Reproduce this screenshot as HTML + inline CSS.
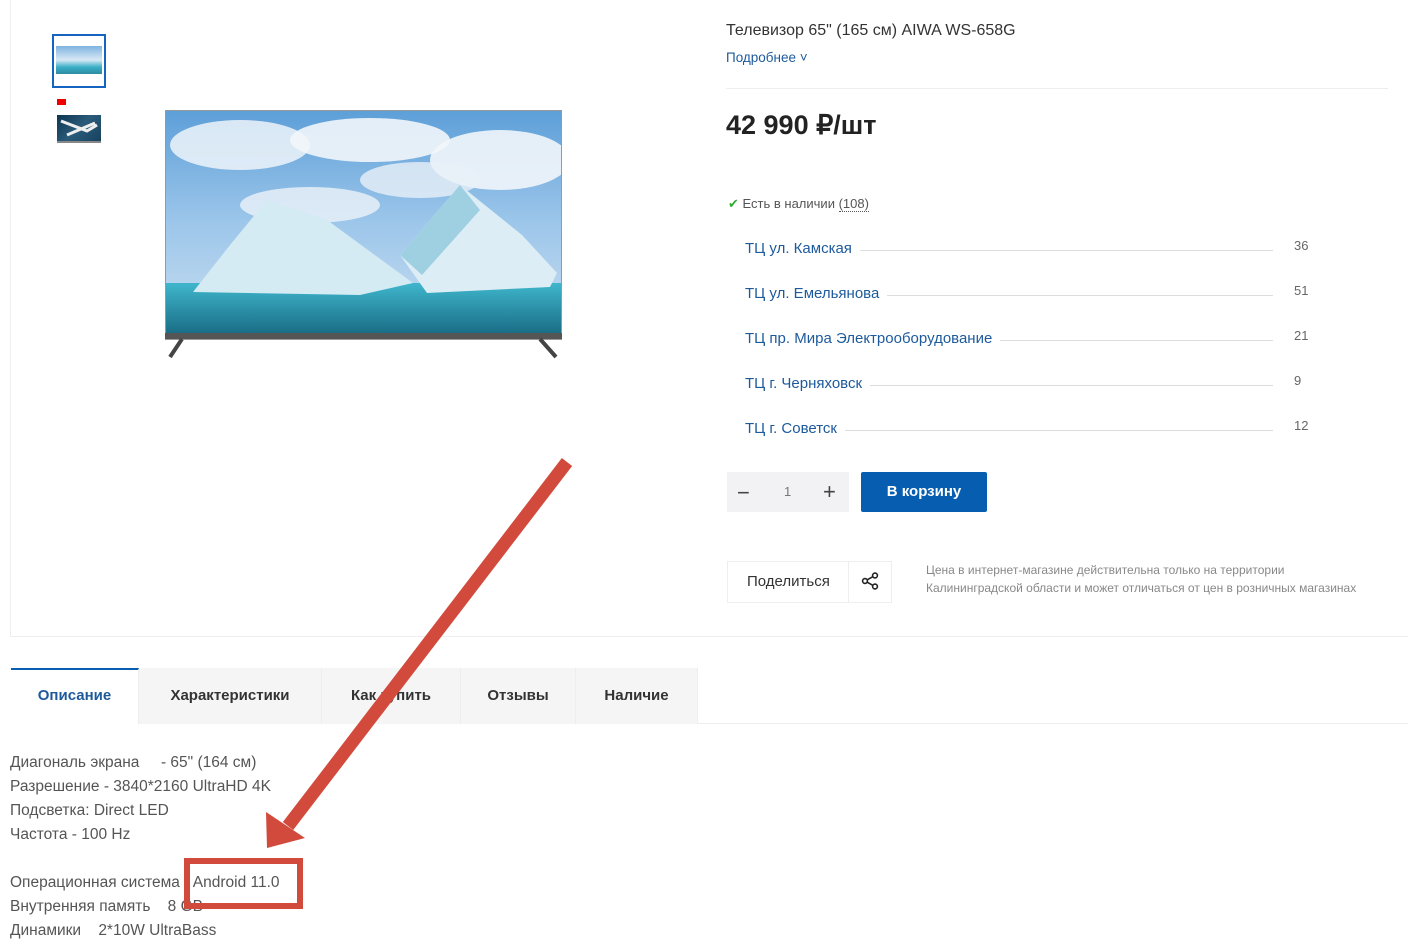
<!DOCTYPE html>
<html><head><meta charset="utf-8"><style>
*{margin:0;padding:0;box-sizing:border-box}
body{width:1408px;height:944px;background:#fff;position:relative;overflow:hidden;font-family:"Liberation Sans Narrow","Liberation Sans",sans-serif;color:#333}
.a{position:absolute;white-space:nowrap}
.st{position:absolute;left:745px;width:580px;height:20px;font-size:15px}
.st .n{position:absolute;left:0;top:0;color:#1d5a9c;background:#fff;padding-right:8px;z-index:1}
.st .l{position:absolute;left:0;width:528px;top:10px;border-top:1px solid #ddd}
.st .c{position:absolute;left:549px;top:-2px;font-size:13px;color:#666}
.tab{position:absolute;top:668px;height:56px;background:#f5f5f5;font:bold 15px "Liberation Sans",sans-serif;color:#333;text-align:center;line-height:56px;border-right:1px solid #eee}
.d{position:absolute;left:10px;font-size:15.5px;color:#555}
</style></head><body>
<div class="a" style="left:10px;top:0;width:1px;height:636px;background:#eee"></div>
<div class="a" style="left:10px;top:636px;width:1398px;height:1px;background:#eee"></div>

<div class="a" style="left:52px;top:34px;width:54px;height:54px;border:2px solid #1565c0;background:#fff">
<div style="position:absolute;left:2px;top:10px;width:46px;height:28px;background:linear-gradient(#7fb3e0,#d8e9f5 50%,#3bb0c8 75%,#2d8aa0)"></div></div>
<div class="a" style="left:57px;top:99px;width:9px;height:6px;background:#e00"></div>
<div class="a" style="left:57px;top:115px;width:44px;height:28px;background:linear-gradient(135deg,#0d3550,#2a5a7a 50%,#18425e);border-bottom:2px solid #888"></div>
<svg class="a" style="left:57px;top:115px" width="44" height="28"><path d="M4 6 L30 16 L40 10 M10 20 L38 8" stroke="#eee" stroke-width="3" fill="none"/></svg>

<svg class="a" style="left:160px;top:105px" width="410" height="260">
<defs><linearGradient id="sk" x1="0" y1="0" x2="0" y2="1"><stop offset="0" stop-color="#5d9fd8"/><stop offset=".5" stop-color="#9cc6ea"/><stop offset="1" stop-color="#c9def0"/></linearGradient>
<linearGradient id="wa" x1="0" y1="0" x2="0" y2="1"><stop offset="0" stop-color="#3fb6cc"/><stop offset="1" stop-color="#1a6e86"/></linearGradient>
<clipPath id="cp"><rect x="6" y="6" width="395" height="222"/></clipPath></defs>
<rect x="5" y="5" width="397" height="230" fill="#999"/>
<g clip-path="url(#cp)">
<rect x="6" y="6" width="395" height="222" fill="url(#sk)"/>
<ellipse cx="80" cy="40" rx="70" ry="25" fill="#eef4fa" opacity=".85"/>
<ellipse cx="210" cy="35" rx="80" ry="22" fill="#f2f6fb" opacity=".9"/>
<ellipse cx="340" cy="55" rx="70" ry="30" fill="#f2f6fb" opacity=".9"/>
<ellipse cx="150" cy="100" rx="70" ry="18" fill="#e8f0f8" opacity=".85"/>
<ellipse cx="260" cy="75" rx="60" ry="18" fill="#e8f0f8" opacity=".8"/>
<rect x="6" y="178" width="395" height="50" fill="url(#wa)"/>
<path d="M33 187 L70 140 L107 95 L167 115 L253 178 L200 190 Z" fill="#d4ebf4"/>
<path d="M240 150 L300 80 L362 130 L397 168 L390 182 L267 188 Z" fill="#dcedf5"/>
<path d="M240 150 L300 80 L320 105 L262 170 Z" fill="#9fd0e2"/>
</g>
<rect x="5" y="228" width="397" height="6" fill="#555"/>
<path d="M22 234 L10 252 M380 234 L396 252" stroke="#444" stroke-width="4"/>
</svg>

<div class="a" style="left:726px;top:22px;font-size:16px;color:#333">Телевизор 65" (165 см) AIWA WS-658G</div>
<div class="a" style="left:726px;top:50px;font-size:13.5px;color:#1d5a9c">Подробнее ˅</div>
<div class="a" style="left:726px;top:88px;width:662px;height:1px;background:#eee"></div>
<div class="a" style="left:726px;top:110px;font:bold 27px 'Liberation Sans Narrow','Liberation Sans',sans-serif;color:#222">42 990 ₽/шт</div>
<div class="a" style="left:728px;top:196px;font-size:13px;color:#555"><span style="color:#3a3">✔</span> Есть в наличии <span style="border-bottom:1px dotted #555">(108)</span></div>

<div class="st" style="top:240px"><span class="n">ТЦ ул. Камская</span><span class="l"></span><span class="c">36</span></div>
<div class="st" style="top:285px"><span class="n">ТЦ ул. Емельянова</span><span class="l"></span><span class="c">51</span></div>
<div class="st" style="top:330px"><span class="n">ТЦ пр. Мира Электрооборудование</span><span class="l"></span><span class="c">21</span></div>
<div class="st" style="top:375px"><span class="n">ТЦ г. Черняховск</span><span class="l"></span><span class="c">9</span></div>
<div class="st" style="top:420px"><span class="n">ТЦ г. Советск</span><span class="l"></span><span class="c">12</span></div>

<div class="a" style="left:727px;top:472px;width:122px;height:40px;background:#f2f2f4"></div>
<div class="a" style="left:737px;top:480px;font-size:22px;color:#444">−</div>
<div class="a" style="left:784px;top:484px;font-size:13px;color:#777">1</div>
<div class="a" style="left:823px;top:479px;font-size:22px;color:#444">+</div>
<div class="a" style="left:861px;top:472px;width:126px;height:40px;background:#075db0;border-radius:2px;color:#fff;font:bold 15px 'Liberation Sans Narrow','Liberation Sans',sans-serif;text-align:center;line-height:40px">В корзину</div>

<div class="a" style="left:727px;top:561px;width:165px;height:42px;border:1px solid #eee"></div>
<div class="a" style="left:848px;top:561px;width:1px;height:42px;background:#eee"></div>
<div class="a" style="left:747px;top:573px;font-size:15px;color:#333">Поделиться</div>
<svg class="a" style="left:860px;top:571px" width="20" height="20"><g fill="none" stroke="#222" stroke-width="1.6"><circle cx="15" cy="4.5" r="2.4"/><circle cx="5" cy="10" r="2.4"/><circle cx="15" cy="15.5" r="2.4"/><path d="M7.2 8.8 L12.8 5.7 M7.2 11.2 L12.8 14.3"/></g></svg>
<div class="a" style="left:926px;top:561px;font-size:12px;color:#888;line-height:18px">Цена в интернет-магазине действительна только на территории<br>Калининградской области и может отличаться от цен в розничных магазинах</div>

<div class="a" style="left:698px;top:723px;width:710px;height:1px;background:#eee"></div>
<div class="tab" style="left:11px;width:128px;background:#fff;border-top:2px solid #0a5eb0;line-height:52px;color:#1d5a9c">Описание</div>
<div class="tab" style="left:139px;width:183px">Характеристики</div>
<div class="tab" style="left:322px;width:139px">Как купить</div>
<div class="tab" style="left:461px;width:115px">Отзывы</div>
<div class="tab" style="left:576px;width:122px">Наличие</div>

<div class="d" style="top:754px">Диагональ экрана&nbsp;&nbsp;&nbsp;&nbsp; - 65" (164 см)</div>
<div class="d" style="top:778px">Разрешение - 3840*2160 UltraHD 4K</div>
<div class="d" style="top:802px">Подсветка: Direct LED</div>
<div class="d" style="top:826px">Частота - 100 Hz</div>
<div class="d" style="top:874px">Операционная система&nbsp;&nbsp; Android 11.0</div>
<div class="d" style="top:898px">Внутренняя память&nbsp;&nbsp;&nbsp; 8 GB</div>
<div class="d" style="top:922px">Динамики&nbsp;&nbsp;&nbsp; 2*10W UltraBass</div>

<svg class="a" style="left:0;top:0" width="1408" height="944">
<path d="M567 462 L288 826" stroke="#d24a3c" stroke-width="13"/>
<path d="M266 812 L267 848 L305 838 Z" fill="#d24a3c"/>
<rect x="187" y="861" width="113" height="45" fill="none" stroke="#d24a3c" stroke-width="6"/>
</svg>
</body></html>
